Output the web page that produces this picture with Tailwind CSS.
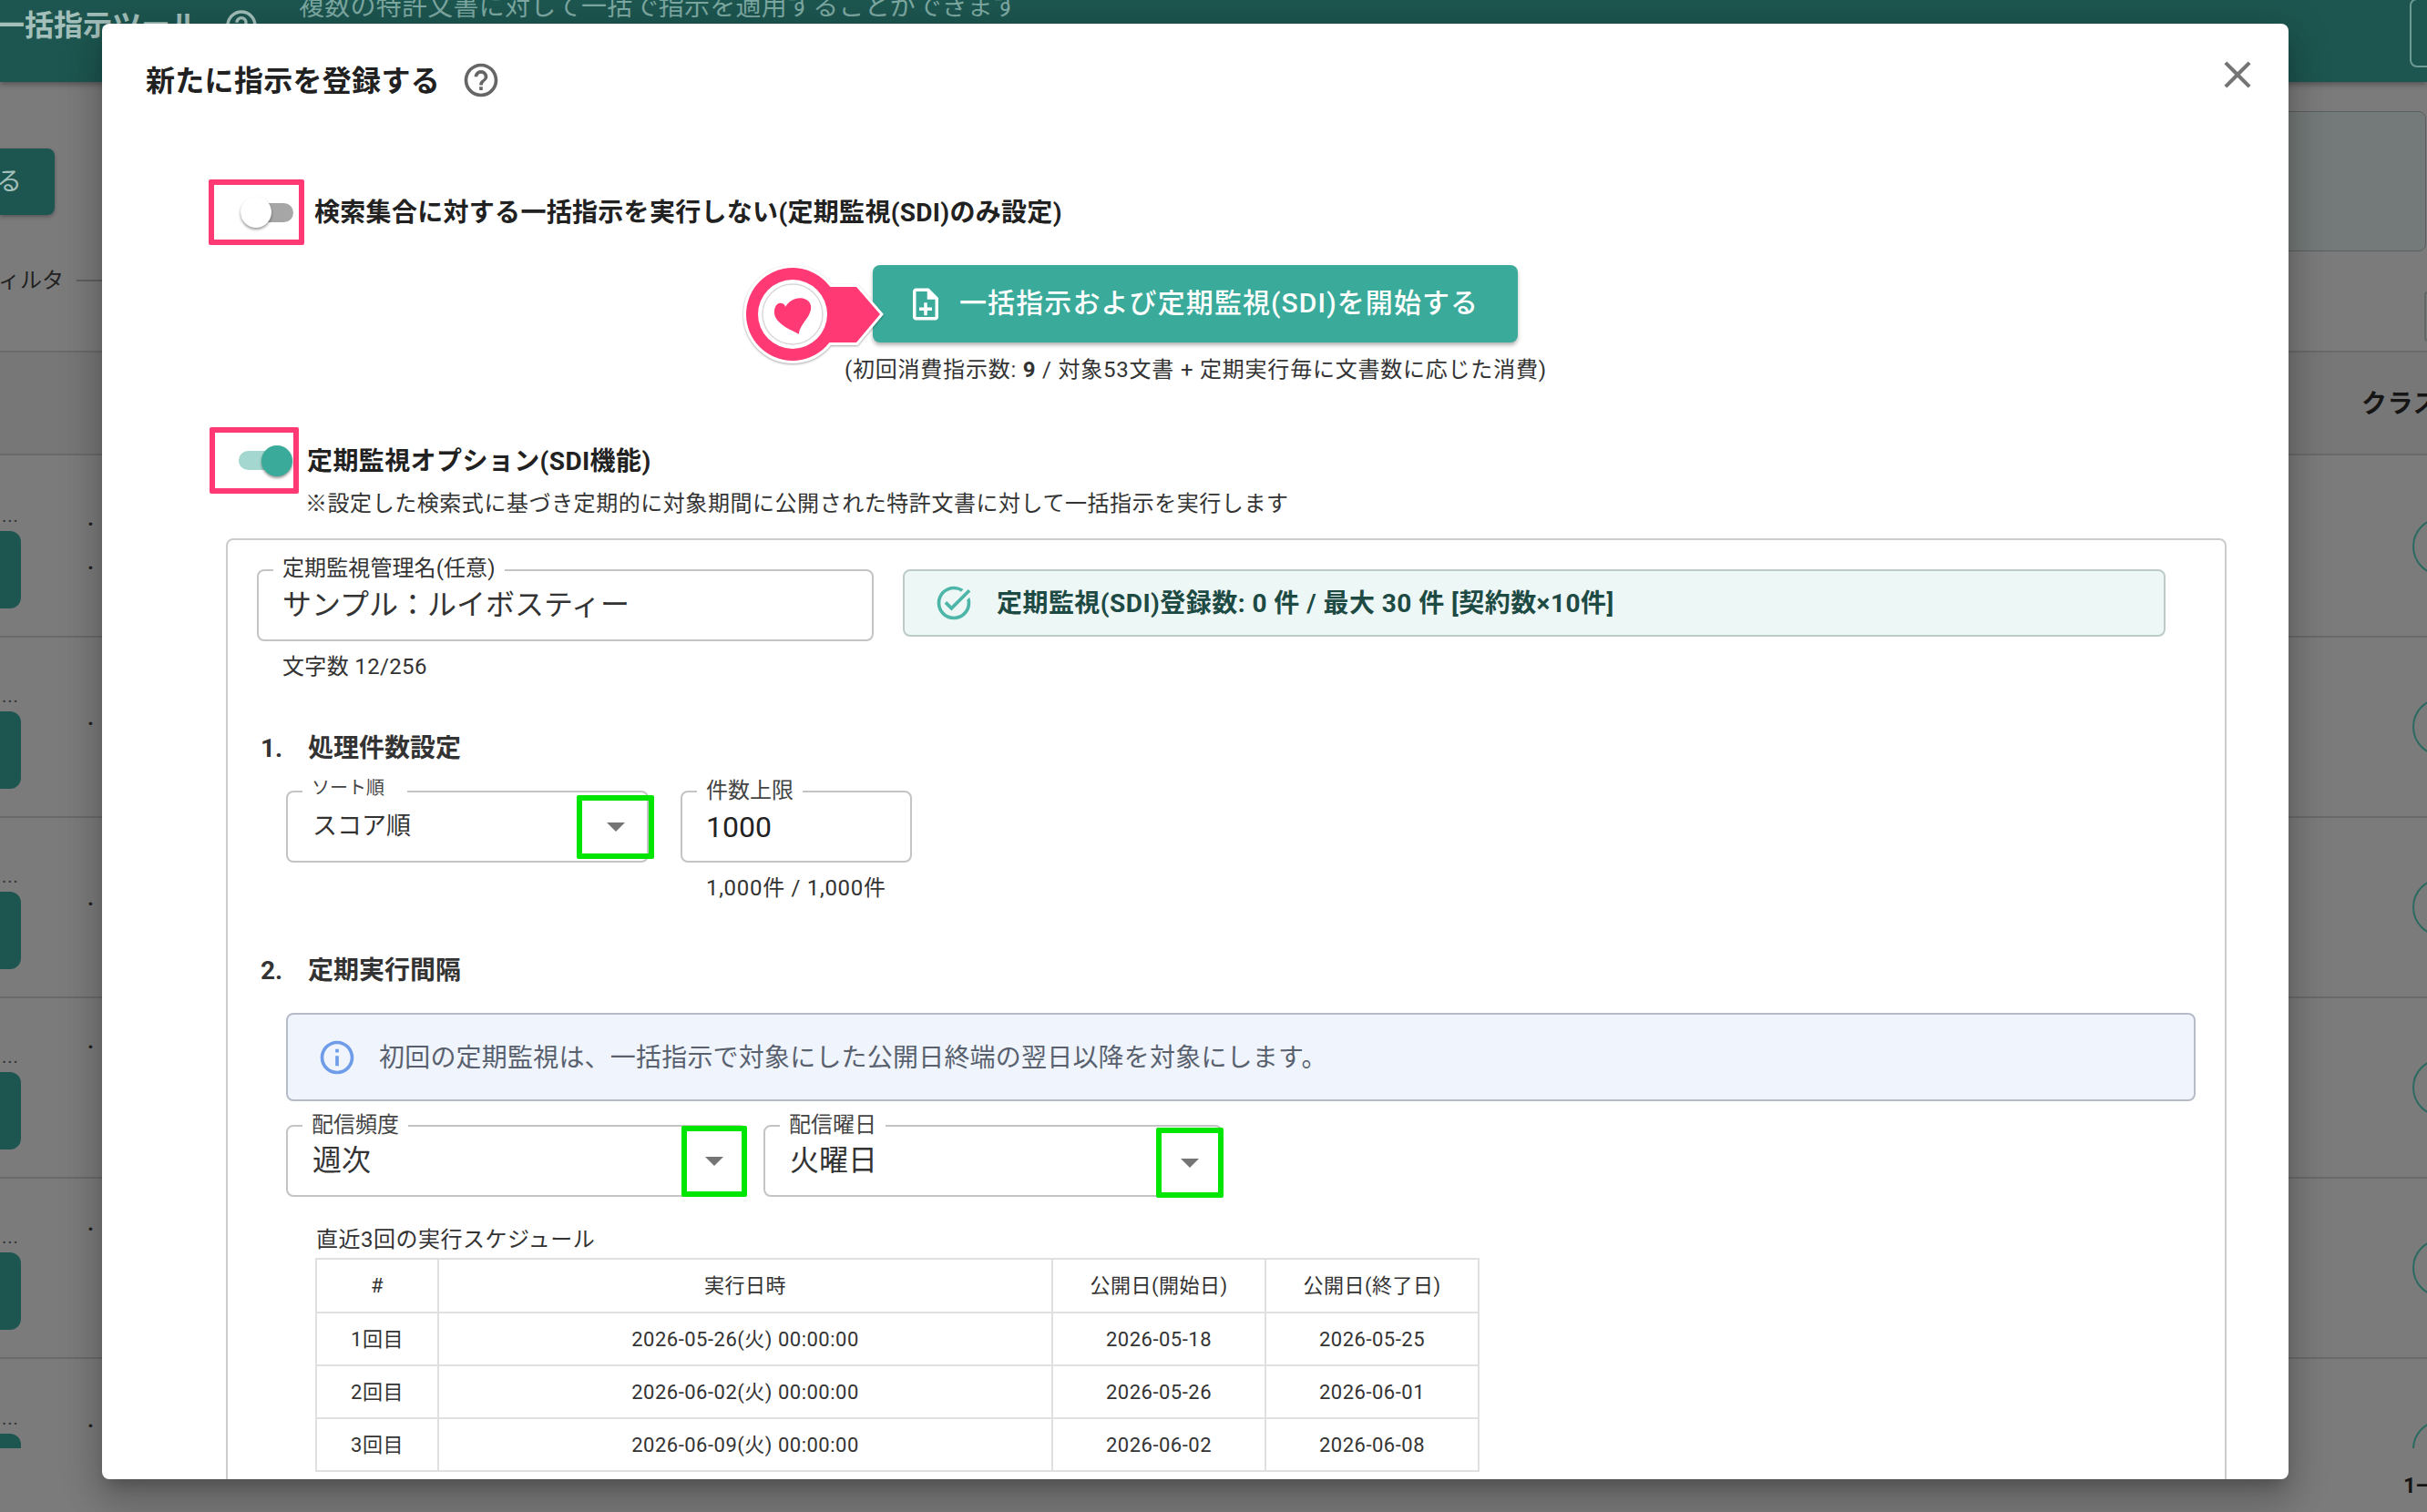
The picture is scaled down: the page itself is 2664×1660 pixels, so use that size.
<!DOCTYPE html>
<html lang="ja">
<head>
<meta charset="utf-8">
<script src="https://cdn.jsdelivr.net/npm/@tailwindcss/browser@4"></script>
<title>新たに指示を登録する</title>
</head>
<body class="relative w-[2664px] h-[1660px] overflow-hidden bg-[#7b7b7b] font-['Roboto','Noto_Sans_CJK_JP',sans-serif] text-[#212121]">

<!-- page behind the dialog -->
<header class="flex items-start h-[90px] bg-[#1d5650] shadow-[0_3px_6px_rgba(0,0,0,0.3)]">
  <div class="flex items-center w-[293px] ml-[-5px] mt-[8px]">
    <span class="text-[32px] leading-[36px] font-bold text-[#a3bfba] whitespace-nowrap">一括指示ツール</span>
    <svg class="w-[40px] h-[40px] ml-[26px] shrink-0 fill-[#a3bfba]" viewBox="0 0 24 24"><path d="M11 18h2v-2h-2v2zm1-16C6.48 2 2 6.48 2 12s4.48 10 10 10 10-4.48 10-10S17.52 2 12 2zm0 18c-4.41 0-8-3.59-8-8s3.59-8 8-8 8 3.59 8 8-3.59 8-8 8zm0-14c-2.21 0-4 1.79-4 4h2c0-1.1.9-2 2-2s2 .9 2 2c0 2-3 1.75-3 5h2c0-2.25 3-2.5 3-5 0-2.21-1.79-4-4-4z"/></svg>
  </div>
  <span class="ml-[40px] mt-[-6px] text-[28px] leading-[28px] tracking-[0.25px] text-[#7da8a2] whitespace-nowrap">複数の特許文書に対して一括で指示を適用することができます</span>
  <div class="ml-auto w-[60px] h-[76px] mr-[-41px] mt-[-2px] rounded-lg border-2 border-[#6d9a94]"></div>
</header>
<section class="flex justify-between pt-[32px] h-[197px]">
  <div class="flex items-center w-[60px] h-[73px] mt-[41px] rounded-r-lg bg-[#1d5650] overflow-hidden shadow-[0_2px_4px_rgba(0,0,0,0.3)]">
    <span class="text-[28px] text-[#a3bfba] ml-[-4px]">る</span>
  </div>
  <div class="w-[240px] h-[154px] rounded-lg border border-[#5a605f] bg-[#747a79] mr-[1px]"></div>
</section>
<section class="flex justify-between items-start h-[98px]">
  <div class="flex items-center mt-[6px]">
    <span class="text-[24px] leading-[30px] text-[#222] ml-[-2px] whitespace-nowrap">ィルタ</span>
    <span class="w-[30px] h-[2px] ml-[14px] bg-[#5f5f5f]"></span>
  </div>
  <div class="w-[6px] h-[55px] mt-[33px] mr-[-3px] rounded-l border-2 border-[#5f6968]"></div>
</section>
<section class="flex items-center justify-end h-[115px] border-t-2 border-b-2 border-[#6a6a6a] bg-[#777777]">
  <span class="text-[28px] font-bold tracking-[0.5px] mt-[2px] text-[#151515] mr-[-13px] whitespace-nowrap">クラス</span>
</section>
<div class="h-[1090px] pt-[2px] overflow-hidden">
  <div class="flex justify-between items-center h-[198px] border-b-2 border-[#6a6a6a]">
    <div class="flex items-start">
      <div class="w-[23px] h-[196px] pt-[56px]">
        <p class="h-[20px] text-[20px] leading-[16px] tracking-[1px] text-[#333] pl-[2px]">...</p>
        <div class="h-[85px] mt-[5px] rounded-r-xl bg-[#1d5650]"></div>
      </div>
      <div class="ml-[73px] pt-[58px] text-[24px] leading-[18px] font-bold text-[#222]"><p>.</p><p class="mt-[30px]">.</p></div>
    </div>
    <div class="w-[64px] h-[64px] mr-[-48px] rounded-full border-2 border-[#2b6a60]"></div>
  </div>
  <div class="flex justify-between items-center h-[198px] border-b-2 border-[#6a6a6a]">
    <div class="flex items-start">
      <div class="w-[23px] h-[196px] pt-[56px]">
        <p class="h-[20px] text-[20px] leading-[16px] tracking-[1px] text-[#333] pl-[2px]">...</p>
        <div class="h-[85px] mt-[5px] rounded-r-xl bg-[#1d5650]"></div>
      </div>
      <div class="ml-[73px] pt-[79px] text-[24px] leading-[18px] font-bold text-[#222]"><p>.</p></div>
    </div>
    <div class="w-[64px] h-[64px] mr-[-48px] rounded-full border-2 border-[#2b6a60]"></div>
  </div>
  <div class="flex justify-between items-center h-[198px] border-b-2 border-[#6a6a6a]">
    <div class="flex items-start">
      <div class="w-[23px] h-[196px] pt-[56px]">
        <p class="h-[20px] text-[20px] leading-[16px] tracking-[1px] text-[#333] pl-[2px]">...</p>
        <div class="h-[85px] mt-[5px] rounded-r-xl bg-[#1d5650]"></div>
      </div>
      <div class="ml-[73px] pt-[79px] text-[24px] leading-[18px] font-bold text-[#222]"><p>.</p></div>
    </div>
    <div class="w-[64px] h-[64px] mr-[-48px] rounded-full border-2 border-[#2b6a60]"></div>
  </div>
  <div class="flex justify-between items-center h-[198px] border-b-2 border-[#6a6a6a]">
    <div class="flex items-start">
      <div class="w-[23px] h-[196px] pt-[56px]">
        <p class="h-[20px] text-[20px] leading-[16px] tracking-[1px] text-[#333] pl-[2px]">...</p>
        <div class="h-[85px] mt-[5px] rounded-r-xl bg-[#1d5650]"></div>
      </div>
      <div class="ml-[73px] pt-[38px] text-[24px] leading-[18px] font-bold text-[#222]"><p>.</p></div>
    </div>
    <div class="w-[64px] h-[64px] mr-[-48px] rounded-full border-2 border-[#2b6a60]"></div>
  </div>
  <div class="flex justify-between items-center h-[198px] border-b-2 border-[#6a6a6a]">
    <div class="flex items-start">
      <div class="w-[23px] h-[196px] pt-[56px]">
        <p class="h-[20px] text-[20px] leading-[16px] tracking-[1px] text-[#333] pl-[2px]">...</p>
        <div class="h-[85px] mt-[5px] rounded-r-xl bg-[#1d5650]"></div>
      </div>
      <div class="ml-[73px] pt-[40px] text-[24px] leading-[18px] font-bold text-[#222]"><p>.</p></div>
    </div>
    <div class="w-[64px] h-[64px] mr-[-48px] rounded-full border-2 border-[#2b6a60]"></div>
  </div>
  <div class="flex justify-between items-center h-[198px]">
    <div class="flex items-start">
      <div class="w-[23px] h-[196px] pt-[56px]">
        <p class="h-[20px] text-[20px] leading-[16px] tracking-[1px] text-[#333] pl-[2px]">...</p>
        <div class="h-[85px] mt-[5px] rounded-r-xl bg-[#1d5650]"></div>
      </div>
      <div class="ml-[73px] pt-[57px] text-[24px] leading-[18px] font-bold text-[#222]"><p>.</p></div>
    </div>
    <div class="w-[64px] h-[64px] mr-[-48px] rounded-full border-2 border-[#2b6a60]"></div>
  </div>
</div>
<footer class="flex justify-end pt-[26px]">
  <span class="text-[24px] leading-[30px] font-bold text-[#151515] mr-[-6px] whitespace-nowrap">1—</span>
</footer>

<!-- dialog -->
<main class="absolute left-[112px] top-[26px] w-[2400px] h-[1598px] overflow-hidden rounded-lg bg-white shadow-[0_11px_15px_-7px_rgba(0,0,0,0.2),0_24px_38px_3px_rgba(0,0,0,0.14),0_9px_46px_8px_rgba(0,0,0,0.12)]">
  <svg class="absolute left-[2319px] top-[31px] w-[50px] h-[50px] fill-[#757575]" viewBox="0 0 24 24"><path d="M19 6.41 17.59 5 12 10.59 6.41 5 5 6.41 10.59 12 5 17.59 6.41 19 12 13.41 17.59 19 19 17.59 13.41 12z"/></svg>

  <div class="flex items-center h-[44px] mt-[40px] ml-[48px]">
    <h2 class="text-[32px] leading-[44px] mt-[2px] font-bold tracking-[0.3px] text-[#212121] whitespace-nowrap">新たに指示を登録する</h2>
    <svg class="w-[44px] h-[44px] ml-[23px] fill-[#666]" viewBox="0 0 24 24"><path d="M11 18h2v-2h-2v2zm1-16C6.48 2 2 6.48 2 12s4.48 10 10 10 10-4.48 10-10S17.52 2 12 2zm0 18c-4.41 0-8-3.59-8-8s3.59-8 8-8 8 3.59 8 8-3.59 8-8 8zm0-14c-2.21 0-4 1.79-4 4h2c0-1.1.9-2 2-2s2 .9 2 2c0 2-3 1.75-3 5h2c0-2.25 3-2.5 3-5 0-2.21-1.79-4-4-4z"/></svg>
  </div>

  <!-- toggle: bulk off -->
  <div class="flex items-center mt-[87px] ml-[117px]">
    <div class="flex items-center w-[105px] h-[72px] pl-[29px] rounded-[2px] border-[6px] border-[#ff3974]">
      <div class="flex items-center w-[58px] h-[21px] rounded-full bg-[#a6a6a6]">
        <div class="shrink-0 w-[34px] h-[34px] rounded-full bg-white shadow-[0_2px_3px_rgba(0,0,0,0.4)]"></div>
      </div>
    </div>
    <span class="ml-[11px] mt-[2px] text-[28px] leading-[36px] font-bold tracking-[0.3px] whitespace-nowrap">検索集合に対する一括指示を実行しない(定期監視(SDI)のみ設定)</span>
  </div>

  <!-- start button -->
  <button class="relative flex items-center w-[708px] h-[85px] mt-[22px] ml-[846px] pl-[37px] rounded-lg bg-[#3aab9a] text-white shadow-[0_3px_4px_rgba(0,0,0,0.3)]">
    <svg class="absolute left-[-148px] top-[-3px] w-[163px] h-[114px]" viewBox="0 0 163 114">
      <g fill="#fff" stroke="#fff" stroke-width="6" style="filter:drop-shadow(0 1px 1px rgba(0,0,0,0.35))">
        <circle cx="60" cy="57" r="51"/>
        <path d="M92 27H130L156 57L130 88H92Z"/>
      </g>
      <circle cx="60" cy="57" r="51" fill="#ff3974"/>
      <path d="M92 27H130L156 57L130 88H92Z" fill="#ff3974"/>
      <circle cx="60" cy="57" r="38" fill="#fff"/>
      <circle cx="60" cy="57" r="33" fill="none" stroke="#d9d9d9" stroke-width="1.5"/>
      <path d="M66.7 78.7C60 75 46 70 41 60C38 52 42 44 47 44.7C50 45 52 47 52 49C56 42 64 38 71 39.5C78 41 81 46 80 52C78 62 68 68 66.7 78.7Z" fill="#ff3974"/>
    </svg>
    <svg class="w-[42px] h-[42px] shrink-0 fill-white" viewBox="0 0 24 24"><path d="M13 11h-2v3H8v2h3v3h2v-3h3v-2h-3zm1-9H6c-1.1 0-2 .9-2 2v16c0 1.1.89 2 1.99 2H18c1.1 0 2-.9 2-2V8l-6-6zm4 18H6V4h7v5h5v11z"/></svg>
    <span class="ml-[16px] mt-[-2px] text-[30px] font-medium tracking-[1.1px] whitespace-nowrap">一括指示および定期監視(SDI)を開始する</span>
  </button>
  <p class="mt-[12px] ml-[815px] text-[24px] leading-[36px] tracking-[0.78px] text-[#333] whitespace-nowrap">(初回消費指示数: <b>9</b> / 対象53文書 + 定期実行毎に文書数に応じた消費)</p>

  <!-- toggle: SDI on -->
  <div class="flex items-center mt-[45px] ml-[118px]">
    <div class="flex items-center w-[98px] h-[73px] pl-[26px] rounded-[2px] border-[6px] border-[#ff3974]">
      <div class="flex items-center justify-end w-[54px] h-[21px] rounded-full bg-[#a3d7cf]">
        <div class="shrink-0 w-[34px] h-[34px] mr-[-5px] rounded-full bg-[#3aab9a] shadow-[0_2px_3px_rgba(0,0,0,0.4)]"></div>
      </div>
    </div>
    <span class="ml-[9px] mt-[2px] text-[28px] leading-[36px] font-bold tracking-[0.4px] whitespace-nowrap">定期監視オプション(SDI機能)</span>
  </div>
  <p class="ml-[223px] text-[24px] leading-[22px] tracking-[0.55px] text-[#333] whitespace-nowrap">※設定した検索式に基づき定期的に対象期間に公開された特許文書に対して一括指示を実行します</p>

  <!-- SDI panel -->
  <section class="w-[2196px] h-[1100px] mt-[27px] ml-[136px] rounded-lg border-2 border-[#cccccc]">
    <div class="flex items-start pt-[32px]">
      <div class="relative flex items-center w-[677px] h-[79px] ml-[32px] pl-[26px] rounded-lg border-2 border-[#c4c4c4]">
        <span class="absolute left-[16px] top-[-17px] px-[10px] bg-white text-[24px] leading-[28px] tracking-[0.1px] text-[#333] whitespace-nowrap">定期監視管理名(任意)</span>
        <span class="text-[32px] mt-[-2px] text-[#333] whitespace-nowrap">サンプル：ルイボスティー</span>
      </div>
      <div class="flex items-center w-[1386px] h-[74px] ml-[32px] pl-[32px] rounded-lg border-2 border-[#bccbc8] bg-[#edf7f6]">
        <svg class="w-[44px] h-[44px] shrink-0 fill-[#4db6a8]" viewBox="0 0 24 24"><path d="M22 5.18 10.59 16.6l-4.24-4.24 1.41-1.41 2.83 2.83 10-10L22 5.18zm-2.21 5.04c.13.57.21 1.17.21 1.78 0 4.42-3.58 8-8 8s-8-3.58-8-8 3.58-8 8-8c1.58 0 3.04.46 4.28 1.25l1.44-1.44C16.1 2.67 14.13 2 12 2 6.48 2 2 6.48 2 12s4.48 10 10 10 10-4.48 10-10c0-1.19-.22-2.33-.6-3.39l-1.61 1.61z"/></svg>
        <span class="ml-[25px] mt-[2px] text-[28px] font-bold tracking-[0.45px] text-[#1e4a44] whitespace-nowrap">定期監視(SDI)登録数: 0 件 / 最大 30 件 [契約数×10件]</span>
      </div>
    </div>
    <p class="mt-[13px] ml-[60px] text-[24px] leading-[30px] tracking-[0.35px] text-[#333]">文字数 12/256</p>

    <h3 class="flex mt-[57px] ml-[36px] text-[28px] leading-[36px] font-bold text-[#333]"><span class="w-[52px]">1.</span>処理件数設定</h3>
    <div class="flex items-start mt-[28px] ml-[64px]">
      <div class="relative flex items-center w-[398px] h-[79px] pl-[27px] rounded-lg border-2 border-[#c4c4c4]">
        <span class="absolute left-[16px] top-[-17px] pl-[10px] pr-[25px] bg-white text-[20px] leading-[24px] text-[#444] whitespace-nowrap">ソート順</span>
        <span class="text-[27px] text-[#333] whitespace-nowrap">スコア順</span>
        <div class="absolute left-[317px] top-[3px] flex items-center justify-center w-[85px] h-[70px] rounded-[2px] border-[6px] border-[#00e600]">
          <span class="w-0 h-0 border-x-[10px] border-t-[10px] border-x-transparent border-t-[#757575]"></span>
        </div>
      </div>
      <div class="relative flex items-center w-[254px] h-[79px] ml-[35px] pl-[26px] rounded-lg border-2 border-[#c4c4c4]">
        <span class="absolute left-[16px] top-[-16px] px-[10px] bg-white text-[24px] leading-[28px] text-[#444] whitespace-nowrap">件数上限</span>
        <span class="text-[32px] text-[#222]">1000</span>
      </div>
    </div>
    <p class="mt-[13px] ml-[525px] text-[24px] leading-[30px] tracking-[0.7px] text-[#333] whitespace-nowrap">1,000件 / 1,000件</p>

    <h3 class="flex mt-[58px] ml-[36px] text-[28px] leading-[36px] font-bold text-[#333]"><span class="w-[52px]">2.</span>定期実行間隔</h3>
    <div class="flex items-center w-[2096px] h-[97px] mt-[28px] ml-[64px] pl-[32px] rounded-lg border-2 border-[#b5bcc8] bg-[#f0f5fd]">
      <svg class="w-[44px] h-[44px] shrink-0 fill-[#6f9ce8]" viewBox="0 0 24 24"><path d="M11 7h2v2h-2zm0 4h2v6h-2zm1-9C6.48 2 2 6.48 2 12s4.48 10 10 10 10-4.48 10-10S17.52 2 12 2zm0 18c-4.41 0-8-3.59-8-8s3.59-8 8-8 8 3.59 8 8-3.59 8-8 8z"/></svg>
      <span class="ml-[24px] mt-[2px] text-[28px] tracking-[0.2px] text-[#59616f] whitespace-nowrap">初回の定期監視は、一括指示で対象にした公開日終端の翌日以降を対象にします。</span>
    </div>
    <div class="flex items-start mt-[26px] ml-[64px]">
      <div class="relative flex items-center w-[506px] h-[79px] pl-[27px] rounded-lg border-2 border-[#c4c4c4]">
        <span class="absolute left-[16px] top-[-16px] px-[10px] bg-white text-[24px] leading-[28px] text-[#444] whitespace-nowrap">配信頻度</span>
        <span class="text-[32px] mt-[-2px] text-[#333] whitespace-nowrap">週次</span>
        <div class="absolute left-[432px] top-[-1px] flex items-center justify-center w-[72px] h-[78px] rounded-[2px] border-[6px] border-[#00e600]">
          <span class="w-0 h-0 border-x-[10px] border-t-[10px] border-x-transparent border-t-[#757575]"></span>
        </div>
      </div>
      <div class="relative flex items-center w-[504px] h-[79px] ml-[18px] pl-[27px] rounded-lg border-2 border-[#c4c4c4]">
        <span class="absolute left-[16px] top-[-16px] px-[10px] bg-white text-[24px] leading-[28px] text-[#444] whitespace-nowrap">配信曜日</span>
        <span class="text-[32px] mt-[-2px] text-[#333] whitespace-nowrap">火曜日</span>
        <div class="absolute left-[429px] top-[1px] flex items-center justify-center w-[74px] h-[77px] rounded-[2px] border-[6px] border-[#00e600]">
          <span class="w-0 h-0 border-x-[10px] border-t-[10px] border-x-transparent border-t-[#757575]"></span>
        </div>
      </div>
    </div>
    <p class="mt-[32px] ml-[97px] text-[24px] leading-[30px] tracking-[0.5px] text-[#333] whitespace-nowrap">直近3回の実行スケジュール</p>
    <table class="w-[1276px] mt-[5px] ml-[96px] table-fixed border-collapse text-[22px] tracking-[0.5px] text-center text-[#333]">
      <colgroup><col class="w-[134px]"><col class="w-[674px]"><col class="w-[234px]"><col class="w-[234px]"></colgroup>
      <thead>
        <tr class="h-[59px]">
          <th class="border-2 border-[#e0e0e0] font-normal">#</th>
          <th class="border-2 border-[#e0e0e0] font-normal">実行日時</th>
          <th class="border-2 border-[#e0e0e0] font-normal">公開日(開始日)</th>
          <th class="border-2 border-[#e0e0e0] font-normal">公開日(終了日)</th>
        </tr>
      </thead>
      <tbody>
        <tr class="h-[58px]">
          <td class="border-2 border-[#e0e0e0]">1回目</td>
          <td class="border-2 border-[#e0e0e0]">2026-05-26(火) 00:00:00</td>
          <td class="border-2 border-[#e0e0e0]">2026-05-18</td>
          <td class="border-2 border-[#e0e0e0]">2026-05-25</td>
        </tr>
        <tr class="h-[58px]">
          <td class="border-2 border-[#e0e0e0]">2回目</td>
          <td class="border-2 border-[#e0e0e0]">2026-06-02(火) 00:00:00</td>
          <td class="border-2 border-[#e0e0e0]">2026-05-26</td>
          <td class="border-2 border-[#e0e0e0]">2026-06-01</td>
        </tr>
        <tr class="h-[58px]">
          <td class="border-2 border-[#e0e0e0]">3回目</td>
          <td class="border-2 border-[#e0e0e0]">2026-06-09(火) 00:00:00</td>
          <td class="border-2 border-[#e0e0e0]">2026-06-02</td>
          <td class="border-2 border-[#e0e0e0]">2026-06-08</td>
        </tr>
      </tbody>
    </table>
  </section>
</main>
</body>
</html>
